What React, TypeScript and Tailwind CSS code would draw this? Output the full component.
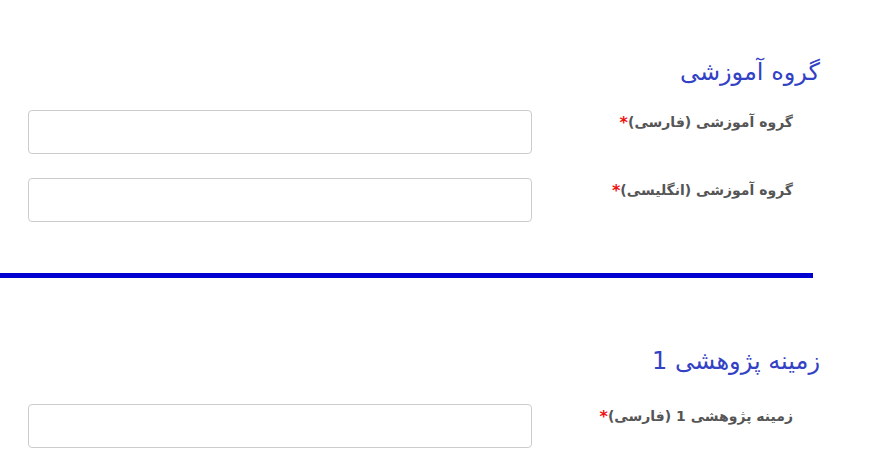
const font = { fontFamily: '"DejaVu Sans", Tahoma, sans-serif' };

function Field({ label }: { label: string }) {
  return (
    <div className="flex items-start">
      <label className="w-[288px] shrink-0 pr-[27px] pt-[3px] text-[14px] font-bold leading-[19px] text-[#555555]">
        {label}
        <span className="align-top text-[16px] text-[#ee1111]">*</span>
      </label>
      <input
        type="text"
        className="h-[44px] w-[504px] rounded-[4px] border border-[#cccccc] bg-white outline-none"
      />
    </div>
  );
}

function Section({ title, fields, gapTop = 20 }: { title: string; fields: string[]; gapTop?: number }) {
  return (
    <section className="pr-[50px] pl-[28px]">
      <h2 className="text-[24px] leading-[36px] text-[#3342c4]">{title}</h2>
      <div className={gapTop === 20 ? "mt-[20px] flex flex-col gap-[24px]" : "mt-[25px] flex flex-col gap-[24px]"}>
        {fields.map((f) => (
          <Field key={f} label={f} />
        ))}
      </div>
    </section>
  );
}

export default function App() {
  return (
    <div dir="rtl" className="min-h-[460px] w-[870px] overflow-hidden bg-white pt-[54px]" style={font}>
      <Section title="گروه آموزشی" fields={["گروه آموزشی (فارسی)", "گروه آموزشی (انگلیسی)"]} />
      <div className="mt-[51px] mr-auto h-[5px] w-[813px] bg-[#0000d0]" />
      <div className="mt-[65px]">
        <Section title="زمینه پژوهشی 1" fields={["زمینه پژوهشی 1 (فارسی)"]} gapTop={25} />
      </div>
    </div>
  );
}
